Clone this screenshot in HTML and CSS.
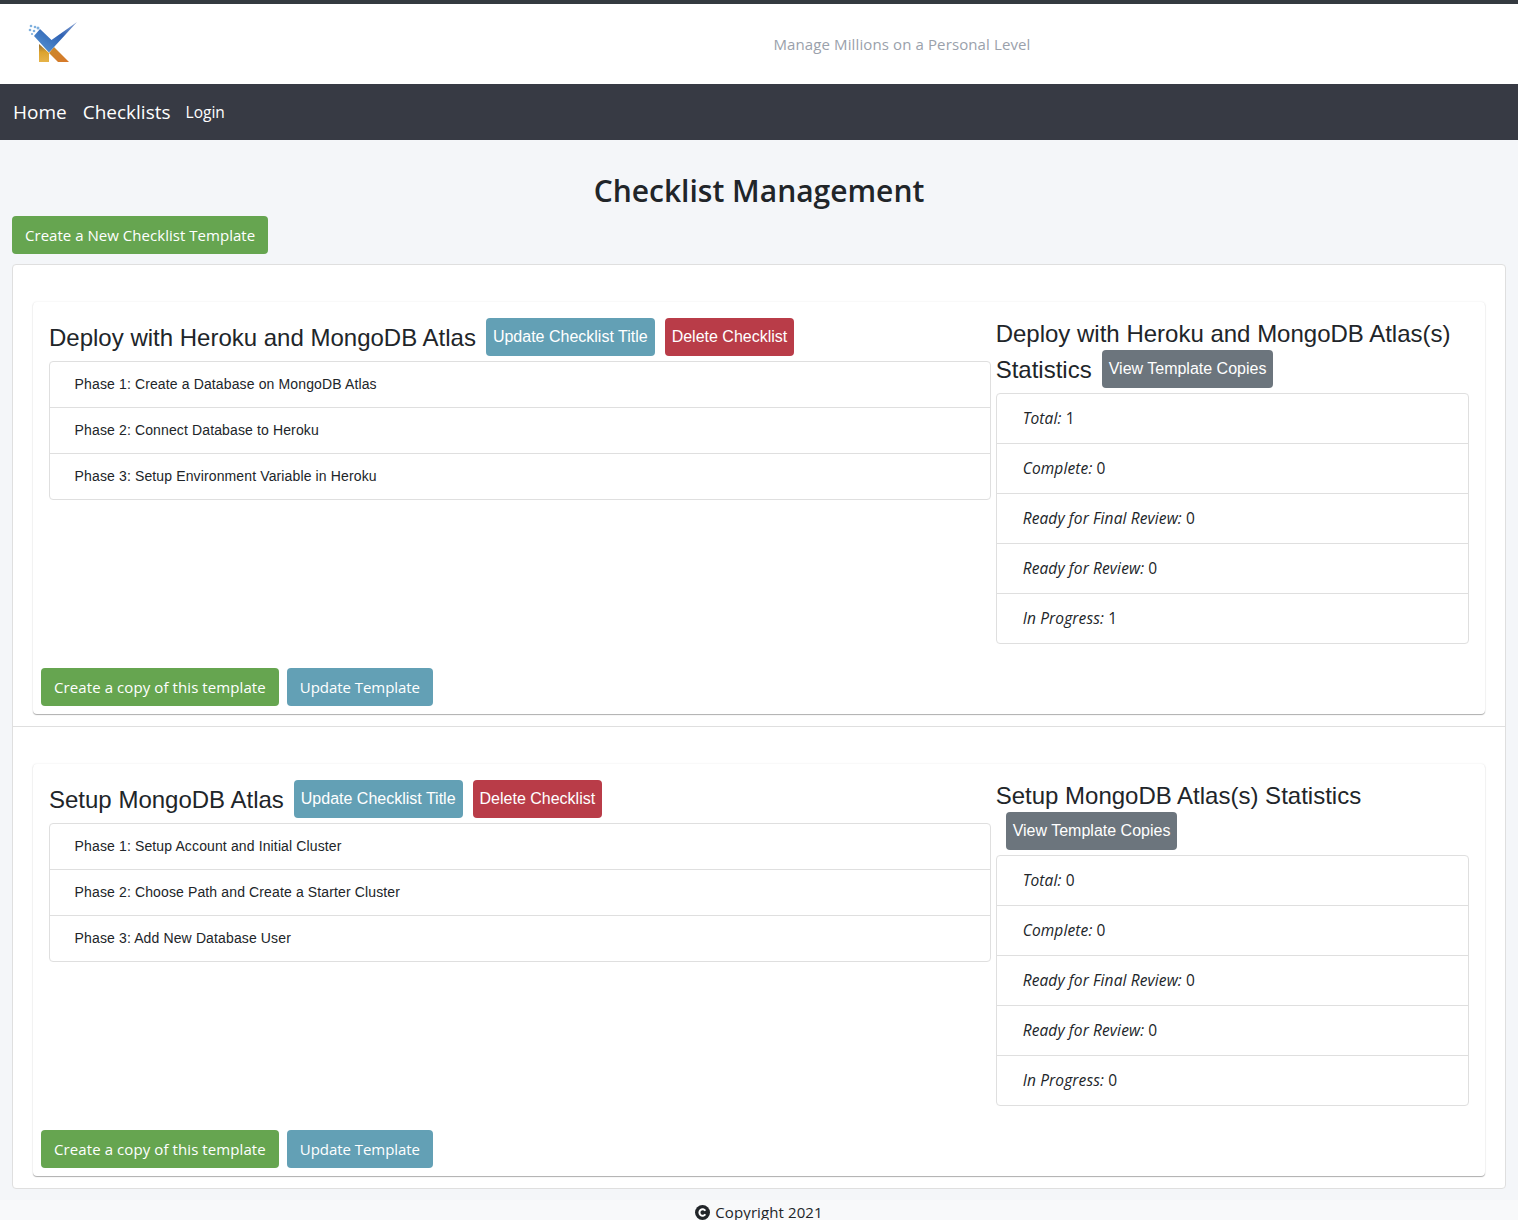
FILE: index.html
```html
<!DOCTYPE html>
<html lang="en">
<head>
<meta charset="utf-8">
<title>Checklist Management</title>
<link rel="stylesheet" href="styles.css">
</head>
<body>
<header class="brand">
  <svg class="logo" viewBox="0 0 70 60" width="70" height="60" aria-label="Logo">
    <defs>
      <linearGradient id="tick" x1="0" y1="1" x2="1" y2="0">
        <stop offset="0" stop-color="#5a9ad6"/>
        <stop offset="0.6" stop-color="#2f62b4"/>
        <stop offset="1" stop-color="#8ea6d4"/>
      </linearGradient>
      <linearGradient id="stem" x1="0" y1="0" x2="0" y2="1">
        <stop offset="0" stop-color="#8f6a34"/>
        <stop offset="0.45" stop-color="#dca32e"/>
        <stop offset="1" stop-color="#e6b348"/>
      </linearGradient>
      <linearGradient id="leg" x1="0" y1="0" x2="1" y2="1">
        <stop offset="0" stop-color="#c98a2c"/>
        <stop offset="1" stop-color="#d8772c"/>
      </linearGradient>
      <filter id="soft"><feGaussianBlur stdDeviation="0.35"/></filter>
    </defs>
    <g filter="url(#soft)">
      <path d="M19 29 L29 38 L29 47 L19 47 Z" fill="url(#stem)"/>
      <path d="M34 32 L49 47 L38 47 L29 38 Z" fill="url(#leg)"/>
      <path d="M57 7 L29 37.5 L14 21 L20 14 L31.5 25 Z" fill="url(#tick)"/>
      <g fill="#7fb0de">
        <circle cx="11" cy="11" r="1.3"/><circle cx="15" cy="12" r="1.3"/><circle cx="10" cy="15" r="1.3"/>
        <circle cx="14" cy="16" r="1.3"/><circle cx="12" cy="19" r="1.1"/><circle cx="18" cy="13" r="1.5"/>
      </g>
    </g>
  </svg>
  <p class="tagline">Manage Millions on a Personal Level</p>
</header>
<nav class="topnav">
  <a class="nav-main" href="#">Home</a>
  <a class="nav-main" href="#">Checklists</a>
  <a class="nav-sub" href="#">Login</a>
</nav>
<main class="content">
  <h1 class="page-title">Checklist Management</h1>
  <a class="btn btn-green btn-new" href="#">Create a New Checklist Template</a>
  <ul class="templates">
    <li class="template">
      <section class="card">
        <div class="card-row">
          <div class="col-left">
            <h4 class="heading">Deploy with Heroku and MongoDB Atlas<a class="btn btn-tight btn-teal" href="#">Update Checklist Title</a><a class="btn btn-tight btn-red" href="#">Delete Checklist</a></h4>
            <ul class="phases">
              <li>Phase 1: Create a Database on MongoDB Atlas</li>
              <li>Phase 2: Connect Database to Heroku</li>
              <li>Phase 3: Setup Environment Variable in Heroku</li>
            </ul>
          </div>
          <div class="col-right">
            <h4 class="heading">Deploy with Heroku and MongoDB Atlas(s) Statistics<a class="btn btn-tight btn-gray" href="#">View Template Copies</a></h4>
            <ul class="stats">
              <li><em>Total:</em> 1</li>
              <li><em>Complete:</em> 0</li>
              <li><em>Ready for Final Review:</em> 0</li>
              <li><em>Ready for Review:</em> 0</li>
              <li><em>In Progress:</em> 1</li>
            </ul>
          </div>
        </div>
        <div class="card-actions">
          <a class="btn btn-green btn-copy" href="#">Create a copy of this template</a>
          <a class="btn btn-teal btn-update" href="#">Update Template</a>
        </div>
      </section>
    </li>
    <li class="template">
      <section class="card">
        <div class="card-row">
          <div class="col-left">
            <h4 class="heading">Setup MongoDB Atlas<a class="btn btn-tight btn-teal" href="#">Update Checklist Title</a><a class="btn btn-tight btn-red" href="#">Delete Checklist</a></h4>
            <ul class="phases">
              <li>Phase 1: Setup Account and Initial Cluster</li>
              <li>Phase 2: Choose Path and Create a Starter Cluster</li>
              <li>Phase 3: Add New Database User</li>
            </ul>
          </div>
          <div class="col-right">
            <h4 class="heading">Setup MongoDB Atlas(s) Statistics<a class="btn btn-tight btn-gray" href="#">View Template Copies</a></h4>
            <ul class="stats">
              <li><em>Total:</em> 0</li>
              <li><em>Complete:</em> 0</li>
              <li><em>Ready for Final Review:</em> 0</li>
              <li><em>Ready for Review:</em> 0</li>
              <li><em>In Progress:</em> 0</li>
            </ul>
          </div>
        </div>
        <div class="card-actions">
          <a class="btn btn-green btn-copy" href="#">Create a copy of this template</a>
          <a class="btn btn-teal btn-update" href="#">Update Template</a>
        </div>
      </section>
    </li>
  </ul>
</main>
<footer class="site-footer">
  <svg class="copy-icon" viewBox="0 0 16 16" width="15" height="15" aria-hidden="true"><circle cx="8" cy="8" r="8" fill="#212529"/><path d="M11 6.2A3.4 3.4 0 1 0 11 9.8" fill="none" stroke="#fff" stroke-width="2.2"/></svg>
  <span>Copyright 2021</span>
</footer>
</body>
</html>
```
FILE: styles.css
```css
* { box-sizing: border-box; }
html, body { margin: 0; height: 1220px; overflow: hidden; }
body {
  background: #f4f6f9;
  color: #212529;
  font-family: "Open Sans", "Noto Sans", sans-serif;
  font-size: 15px;
  line-height: 24px;
}
a { text-decoration: none; }
ul { list-style: none; margin: 0; padding: 0; }

.brand {
  display: grid;
  grid-template-columns: 286px 1fr;
  align-items: center;
  height: 84px;
  background: #fff;
  border-top: 4px solid #343a40;
}
.logo { display: block; margin: 2px 0 0 20px; }
.tagline { margin: 0; text-align: center; color: #9aa1ab; letter-spacing: .115px; }

.topnav {
  display: flex;
  align-items: center;
  gap: 16px;
  height: 56px;
  padding-left: 13px;
  background: #373a44;
}
.nav-main { color: #fff; font-size: 19px; line-height: 30px; }
.nav-sub { color: #fff; font-size: 15.5px; line-height: 30px; margin-left: -1px; }

.content { padding: 32px 12px 0; }
.page-title {
  margin: 0 0 6px;
  text-align: center;
  font-size: 30px;
  font-weight: 600;
  line-height: 38px;
}

.btn {
  display: inline-block;
  padding: 6px 12px;
  border: 1px solid transparent;
  border-radius: 4px;
  color: #fff;
  line-height: 24px;
  white-space: nowrap;
}
.btn-new { letter-spacing: .03px; }
.btn-copy { letter-spacing: .09px; }
.btn-update { letter-spacing: -.05px; }
.btn-tight {
  margin-left: 10px;
  padding: 6px;
  font-family: "Liberation Sans", Arial, sans-serif;
  font-size: 16px;
  font-weight: 400;
  vertical-align: 4px;
}
.btn-green { background: #66a550; }
.btn-teal { background: #63a0b5; }
.btn-red { background: #b93c48; }
.btn-gray { background: #6c757d; }

.templates {
  margin-top: 10px;
  background: #fff;
  border: 1px solid #dfdfdf;
  border-radius: 4px;
}
.template { padding: 37px 20px 12px; }
.template + .template { border-top: 1px solid #dfdfdf; }

.card {
  background: #fff;
  border-radius: 4px;
  box-shadow: 0 0 2px rgba(0, 0, 0, .1), 0 1px 1px rgba(0, 0, 0, .3);
}
.card-row {
  display: grid;
  grid-template-columns: 2fr 1fr;
  padding: 16px 16px 0;
}
.col-left { padding-right: 5px; }
.heading {
  margin: 0 0 5px;
  font-family: "Liberation Sans", Arial, sans-serif;
  font-size: 24px;
  font-weight: 400;
  line-height: 32px;
}

.phases, .stats {
  border: 1px solid #dfdfdf;
  border-radius: 4px;
}
.phases li {
  padding: 12px 25px 12px 24.6px;
  font-family: "Liberation Sans", Arial, sans-serif;
  font-size: 14px;
  line-height: 21px;
  letter-spacing: .13px;
}
.stats li { padding: 12px 26px; font-size: 15.5px; line-height: 25px; letter-spacing: .12px; }
.phases li + li, .stats li + li { border-top: 1px solid #dfdfdf; }

.card-actions {
  display: flex;
  gap: 8px;
  padding: 24px 8px 8px;
}

.site-footer {
  display: flex;
  justify-content: center;
  align-items: center;
  gap: 5px;
  height: 24px;
  margin-top: 11px;
  background: #f8f9fa;
  letter-spacing: .1px;
}
```
